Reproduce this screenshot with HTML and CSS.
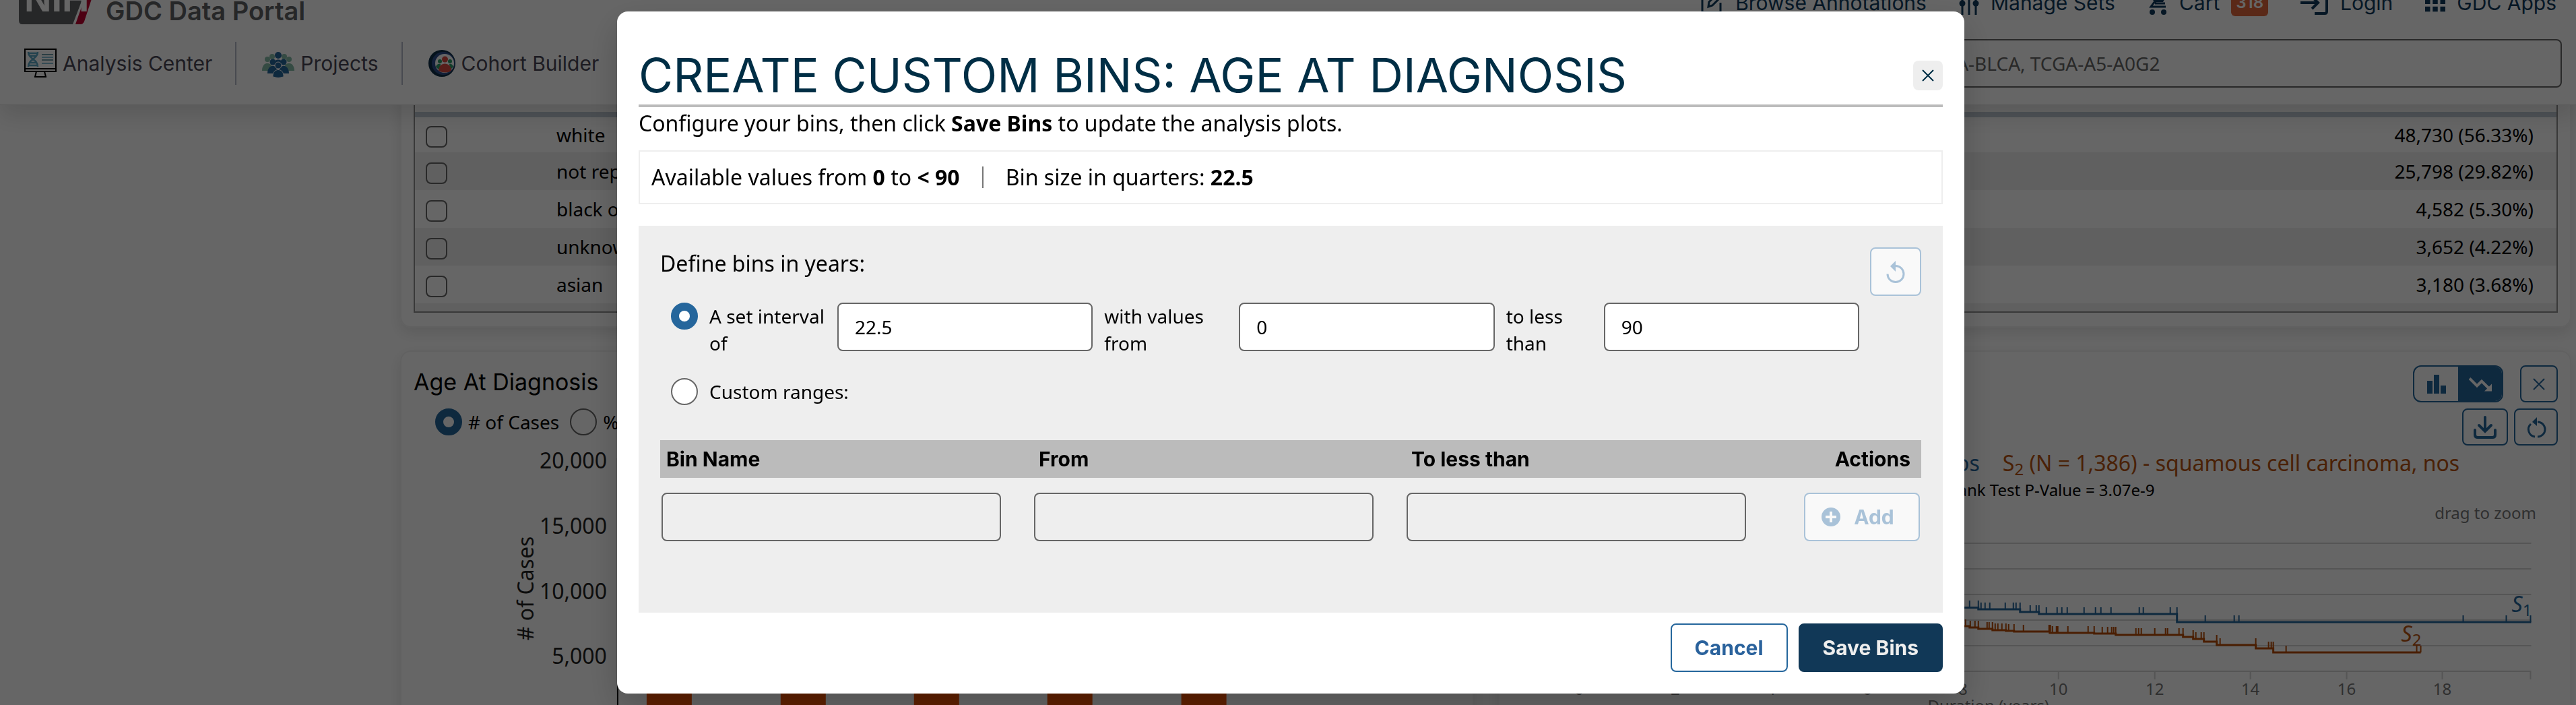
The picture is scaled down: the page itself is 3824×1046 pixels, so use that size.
FILE: index.html
```html
<!DOCTYPE html>
<html lang="en">
<head>
<meta charset="utf-8">
<title>GDC Data Portal</title>
<link rel="stylesheet" href="styles.css">
</head>
<body>
<header class="site-header">
  <div class="top-row">
    <a class="brand" href="#">
      <svg class="brand-logo" viewBox="0 0 114 68" aria-hidden="true">
        <path d="M0 0H106L80 68H5Q0 68 0 62Z" fill="#5f6165"/>
        <path d="M108 0H118L97 64Q95 68 92 68H84Z" fill="#c00030"/>
        <text x="8" y="49" class="nih">NIH</text>
      </svg>
      <span class="brand-name">GDC Data Portal</span>
    </a>
    <nav class="utility">
      <a href="#"><svg class="ico" viewBox="0 0 36 36"><path d="M20 5H4V32H31V18M13 24L14 17L28 3L33 8L19 22Z" fill="none" stroke="currentColor" stroke-width="3"/></svg>Browse Annotations</a>
      <a href="#"><svg class="ico slim" viewBox="0 0 30 36"><path d="M5 2V36M15 2V36M25 2V36" stroke="currentColor" stroke-width="3"/><circle cx="5" cy="19" r="4.500"/><circle cx="15" cy="8" r="4.500"/><circle cx="25" cy="19" r="4.500"/></svg>Manage Sets</a>
      <a href="#"><svg class="ico slim" viewBox="0 0 30 36"><path d="M0 3H5L12 19H26" fill="none" stroke="currentColor" stroke-width="3"/><path d="M7 5H29L23 17H12Z"/><path d="M10 17L5 24H27" fill="none" stroke="currentColor" stroke-width="3"/><circle cx="7" cy="32" r="4"/><circle cx="24" cy="32" r="4"/></svg>Cart<span class="badge">318</span></a>
      <a href="#"><svg class="ico wide" viewBox="0 0 42 36"><path d="M20 3H37Q39 3 39 6V31Q39 34 36 34H21M0 18H25M17 9L26 18L17 27" fill="none" stroke="currentColor" stroke-width="4"/></svg>Login</a>
      <a href="#"><svg class="ico slim" viewBox="0 0 32 36"><path d="M0 0h8v8h-8zM12 0h8v8h-8zM24 0h8v8h-8zM0 12h8v8h-8zM12 12h8v8h-8zM24 12h8v8h-8zM0 24h8v8h-8zM12 24h8v8h-8zM24 24h8v8h-8z"/></svg>GDC Apps</a>
    </nav>
  </div>
  <div class="nav-row">
    <nav class="tabs">
      <a href="#"><svg class="tab-ico" viewBox="0 0 48 44"><path d="M1 1H47V34H1ZM1 30H47M18 34L16 42M30 34L32 42M15 42H33" fill="none" stroke="#000" stroke-width="2"/><path d="M6 5C6 16 20 15 20 27M20 5C20 16 6 15 6 27M6 7H20M8 11H18M8 21H18M6 25H20" fill="none" stroke="#5aa5c4" stroke-width="2.500"/><path d="M26 9H43M26 17H43" stroke="#3f7f8f" stroke-width="1.500"/><path d="M26 13H43M26 22H43" stroke="#5aa5c4" stroke-width="1.500"/></svg>Analysis Center</a>
      <a href="#"><svg class="tab-ico" viewBox="0 0 48 44"><g fill="#85bba8"><circle cx="8" cy="16" r="4"/><circle cx="40" cy="16" r="4"/><circle cx="15" cy="12" r="4"/><circle cx="33" cy="12" r="4"/><path d="M0 33C0 18 16 18 16 33ZM32 33C32 18 48 18 48 33Z"/></g><g fill="#25669c"><circle cx="24" cy="10" r="5"/><path d="M17 24C17 14 31 14 31 24Z"/><circle cx="16" cy="20" r="4.500"/><circle cx="32" cy="20" r="4.500"/><path d="M8 37C8 22 24 22 24 37ZM24 37C24 22 40 22 40 37Z"/></g><g fill="#25669c" stroke="#fff"><circle cx="24" cy="25" r="5"/><path d="M16 42C15 28 33 28 32 42Q24 45 16 42Z"/></g></svg>Projects</a>
      <a href="#"><svg class="tab-ico round" viewBox="0 0 40 40"><circle cx="20" cy="20" r="20" fill="#0d2f47"/><circle cx="22" cy="20" r="17" fill="#2f4f8c"/><circle cx="24" cy="20" r="14" fill="#fff"/><circle cx="17" cy="17" r="3" fill="#2d9b69"/><circle cx="32" cy="17" r="3" fill="#2d9b69"/><path d="M11 25Q13 20 18 21L17 31ZM37 25Q35 20 31 21L32 30Z" fill="#2d9b69"/><circle cx="24.500" cy="14" r="4.500" fill="#d94c42"/><path d="M15 31C15 17 34 17 34 31Q25 36 15 31Z" fill="#d94c42"/></svg>Cohort Builder</a>
    </nav>
    <input class="site-search" type="search" aria-label="Search" placeholder="e.g. BRAF, Breast, TCGA-BLCA, TCGA-A5-A0G2">
  </div>
</header>

<main class="board">
  <section class="card first">
    <div class="table-scroll">
      <table class="counts">
        <thead><tr><th>Select</th><th>Race</th><th class="num"># Cases</th></tr></thead>
        <tbody>
          <tr><td><input type="checkbox" aria-label="white"></td><td>white</td><td class="num"></td></tr>
          <tr><td><input type="checkbox" aria-label="not reported"></td><td>not reported</td><td class="num"></td></tr>
          <tr><td><input type="checkbox" aria-label="black or african american"></td><td>black or african american</td><td class="num"></td></tr>
          <tr><td><input type="checkbox" aria-label="unknown"></td><td>unknown</td><td class="num"></td></tr>
          <tr><td><input type="checkbox" aria-label="asian"></td><td>asian</td><td class="num"></td></tr>
          <tr><td></td><td></td><td></td></tr>
        </tbody>
      </table>
    </div>
  </section>
  <section class="card first">
    <div class="table-scroll">
      <table class="counts">
        <thead><tr><th>Select</th><th>Gender</th><th class="num"># Cases</th></tr></thead>
        <tbody>
          <tr><td></td><td></td><td class="num">48,730 (56.33%)</td></tr>
          <tr><td></td><td></td><td class="num">25,798 (29.82%)</td></tr>
          <tr><td></td><td></td><td class="num">4,582 (5.30%)</td></tr>
          <tr><td></td><td></td><td class="num">3,652 (4.22%)</td></tr>
          <tr><td></td><td></td><td class="num">3,180 (3.68%)</td></tr>
          <tr><td></td><td></td><td></td></tr>
        </tbody>
      </table>
    </div>
  </section>

  <section class="card">
    <h2>Age At Diagnosis</h2>
    <div class="unit">
      <label><input type="radio" name="unit" checked># of Cases</label>
      <label><input type="radio" name="unit">% of Cases</label>
    </div>
    <svg class="plot" viewBox="0 0 1554 400" role="img" aria-label="Cases by age">
      <g class="axis-big" text-anchor="end">
        <text x="287" y="35">20,000</text><text x="287" y="132">15,000</text><text x="287" y="229">10,000</text><text x="287" y="325">5,000</text>
      </g>
      <text class="axis-big" text-anchor="middle" transform="translate(178 213) rotate(-90)"># of Cases</text>
      <path d="M303 20V400" stroke="#000" stroke-width="2"/>
      <path d="M346 300h67v100h-67zM545 300h67v100h-67zM743 300h67v100h-67zM941 300h67v100h-67zM1140 300h67v100h-67z" fill="#ee5000"/>
    </svg>
  </section>

  <section class="card">
    <div class="tools">
      <div class="toggle">
        <button type="button" aria-label="Histogram"><svg viewBox="0 0 28 28"><path d="M0 9h8v19h-8zM10 0h8v28h-8zM20 16h8v12h-8z"/></svg></button><button type="button" class="on" aria-label="Survival plot"><svg class="trend" viewBox="0 0 34 21"><path d="M1 2L12 13L19 6L30 17" fill="none" stroke="currentColor" stroke-width="4"/><path d="M34 10V21H23Z"/></svg></button>
      </div>
      <button type="button" class="tool close" aria-label="Remove"><svg class="cross" viewBox="0 0 18 18"><path d="M1 1L17 17M17 1L1 17" stroke="currentColor" stroke-width="2"/></svg></button>
    </div>
    <div class="tools second">
      <button type="button" class="tool save" aria-label="Download"><svg class="dl" viewBox="0 0 34 34"><path d="M17 2V22M8 14L17 23L26 14M2 21V28Q2 32 6 32H28Q32 32 32 28V21" fill="none" stroke="currentColor" stroke-width="4" stroke-linecap="round"/></svg></button>
      <button type="button" class="tool" aria-label="Reset zoom"><svg class="dl" viewBox="0 0 34 34"><path d="M19 9A11 11 0 0 1 19 31M15 31A11 11 0 0 1 9 12" fill="none" stroke="currentColor" stroke-width="3"/><path d="M18 2V15L11 9Z"/></svg></button>
    </div>
    <p class="legend"><span class="s1">S<sub>1</sub> (N = 5,173) - adenocarcinoma, nos</span><span class="s2">S<sub>2</sub> (N = 1,386) - squamous cell carcinoma, nos</span></p>
    <p class="pvalue">Log-Rank Test P-Value = 3.07e-9</p>
    <p class="hint">drag to zoom</p>
    <svg class="plot" viewBox="0 0 1554 300" role="img" aria-label="Survival curves">
      <path d="M100 26H1514M100 64H1514M100 102H1514M100 140H1514M100 178H1514M100 216H1514M812 216v12M955 216v12M1097 216v12M1240 216v12M1382 216v12M1513 216v12" stroke="#d4d4d4" stroke-width="2" fill="none"/>
      <g fill="none" stroke="#25669c">
        <path stroke-width="3" d="M600 121.500H693V124H755V128H783V131H988V143H1514"/>
        <path stroke-width="2" d="M680 121v-10M693 121v-10M697 124v-10M703 124v-10M710 124v-10M733 124v-10M745 124v-10M749 124v-10M755 124v-10M770 128v-10M779 128v-10M783 128v-10M794 131v-10M810 131v-10M817 131v-10M825 131v-10M850 131v-10M867 131v-10M875 131v-10M890 131v-10M932 131v-10M938 131v-10M978 131v-10M988 131v-10M1030 143v-10M1073 143v-10M1080 143v-10M1413 143v-10M1477 143v-10M1513 143v-10"/>
      </g>
      <g fill="none" stroke="#b84c05">
        <path stroke-width="3" d="M600 149H680V151H693V153H714V155H734V156H746V157H799V159H865V160H897V162H997V165H1012V168H1028V172H1047V177H1105V182H1131V188H1350"/>
        <path stroke-width="2" d="M674 149v-10M681 151v-10M688 151v-10M693 151v-10M706 153v-10M709 153v-10M714 153v-10M718 155v-10M722 155v-10M728 155v-10M734 155v-10M738 156v-10M746 156v-10M760 157v-10M798 157v-10M800 157v-10M803 159v-10M809 159v-10M811 159v-10M826 159v-10M856 159v-10M865 159v-10M877 160v-10M885 160v-10M891 160v-10M894 160v-10M897 160v-10M927 162v-10M931 162v-10M935 162v-10M955 162v-10M971 162v-10M974 162v-10M991 162v-10M997 162v-10M1012 165v-10M1016 168v-10M1024 168v-10M1028 168v-10M1047 172v-10M1052 177v-10M1105 177v-10M1124 182v-10M1128 182v-10M1131 182v-10M1150 188v-10M1344 188v-10M1350 188v-10"/>
      </g>
      <text class="curve s1" x="1485" y="128">S<tspan class="sub" dy="6">1</tspan></text>
      <text class="curve s2" x="1321" y="172">S<tspan class="sub" dy="6">2</tspan></text>
      <g class="ticks" text-anchor="middle">
        <text x="100" y="251">0</text><text x="243" y="251">2</text><text x="385" y="251">4</text><text x="528" y="251">6</text><text x="670" y="251">8</text><text x="812" y="251">10</text><text x="955" y="251">12</text><text x="1097" y="251">14</text><text x="1240" y="251">16</text><text x="1382" y="251">18</text>
        <text x="708" y="276">Duration (years)</text>
      </g>
    </svg>
  </section>
</main>

<div class="overlay">
  <form class="modal" role="dialog" aria-labelledby="modal-title">
    <header class="modal-head">
      <h1 id="modal-title">CREATE CUSTOM BINS: AGE AT DIAGNOSIS</h1>
      <button type="button" class="modal-close" aria-label="Close"><svg class="cross" viewBox="0 0 18 18"><path d="M1 1L17 17M17 1L1 17" stroke="currentColor" stroke-width="2"/></svg></button>
    </header>
    <p class="intro">Configure your bins, then click <b>Save Bins</b> to update the analysis plots.</p>
    <div class="facts"><span>Available values from <b>0</b> to <b>&lt; 90</b></span><span class="rule"></span><span>Bin size in quarters: <b>22.5</b></span></div>
    <div class="panel">
      <div class="panel-head">
        <span>Define bins in years:</span>
        <button type="button" class="reset" disabled aria-label="Reset"><svg viewBox="0 0 28 34"><path d="M14 8.500A12 12 0 1 1 2 20.500" fill="none" stroke="currentColor" stroke-width="3"/><path d="M14 1V17L6 9Z"/></svg></button>
      </div>
      <div class="interval">
        <input type="radio" name="mode" id="mode-set" checked>
        <label for="mode-set">A set interval of</label>
        <input type="text" value="22.5" aria-label="Interval">
        <label for="from">with values from</label>
        <input type="text" id="from" value="0">
        <label for="to">to less than</label>
        <input type="text" id="to" value="90">
      </div>
      <div class="custom">
        <input type="radio" name="mode" id="mode-custom">
        <label for="mode-custom">Custom ranges:</label>
      </div>
      <table class="bins">
        <thead><tr><th>Bin Name</th><th>From</th><th>To less than</th><th class="actions">Actions</th></tr></thead>
        <tbody><tr>
          <td><input type="text" disabled aria-label="Bin name"></td>
          <td><input type="text" disabled aria-label="Bin from"></td>
          <td><input type="text" disabled aria-label="Bin to less than"></td>
          <td class="actions"><button type="button" class="add" disabled><svg viewBox="0 0 28 28"><path fill-rule="evenodd" d="M14 0A14 14 0 1 1 14 28A14 14 0 1 1 14 0ZM12 6V12H6V16H12V22H16V16H22V12H16V6Z"/></svg>Add</button></td>
        </tr></tbody>
      </table>
    </div>
    <footer class="modal-foot">
      <button type="button" class="btn">Cancel</button>
      <button type="submit" class="btn primary">Save Bins</button>
    </footer>
  </form>
</div>
</body>
</html>
```
FILE: styles.css
```css
* { box-sizing: border-box; }

body {
  margin: 0;
  height: 100vh;
  overflow: hidden;
  background: #fff;
  color: #000;
  font: 28px/40px "Noto Sans", sans-serif;
}

h1, h2, p { margin: 0; font-weight: 400; }
a { color: inherit; text-decoration: none; }
button, input { font: inherit; color: inherit; margin: 0; }
svg { display: block; fill: currentColor; }

/* Header, scrolled partly out of view */
.site-header {
  position: relative;
  z-index: 1;
  margin-top: -32px;
  background: #fff;
  border-bottom: 2px solid #eee;
  box-shadow: 0 16px 32px rgba(0, 0, 0, .12);
  font-family: Inter, sans-serif;
  font-size: 30px;
}

.top-row {
  display: flex;
  justify-content: space-between;
  align-items: center;
  height: 72px;
  padding: 0 29px 0 28px;
}

.brand { display: flex; gap: 15px; align-items: flex-end; height: 100%; padding-bottom: 4px; color: #5f6165; }
.brand-logo { width: 114px; height: 68px; overflow: visible; }
.nih { font: bold 56px "Liberation Sans", sans-serif; fill: #fff; }
.brand-name { font-size: 38px; font-weight: 600; line-height: 40px; }

.utility { display: flex; gap: 48px; color: #0f3b5e; }
.utility a { display: flex; align-items: center; gap: 17px; }
.ico { width: 36px; height: 36px; }
.ico.slim { width: 30px; }
.ico.wide { width: 42px; }

.badge {
  padding: 0 7px;
  border-radius: 6px;
  background: #e0663c;
  color: #fff;
  font-size: 24px;
  font-weight: 600;
}

.nav-row {
  display: flex;
  justify-content: space-between;
  align-items: center;
  padding: 18px 21px 24px 36px;
}

.tabs { display: flex; color: #4a4656; }
.tabs a { display: flex; align-items: center; gap: 9px; height: 64px; padding-right: 34px; }
.tabs a + a { border-left: 2px solid #b5b8c8; padding-left: 38px; }
.tab-ico { width: 48px; height: 44px; }
.tab-ico.round { width: 40px; }

.site-search {
  width: 34%;
  height: 72px;
  padding: 0 92px;
  border: 2px solid #666;
  border-radius: 8px;
  background: #fff;
  font-family: "Noto Sans", sans-serif;
  font-size: 28px;
}
.site-search::placeholder { color: #666; opacity: 1; }

/* Cards */
.board {
  display: grid;
  grid-template-columns: 1fr 1fr;
  gap: 34px 36px;
  margin-top: -80px;
  padding: 0 7px 0 594px;
}

.card {
  padding: 20px 18px;
  border: 2px solid #f3f3f3;
  border-radius: 16px;
  box-shadow: 0 8px 20px rgba(0, 0, 0, .1);
}

.card h2 { font: 34px/48px Inter, sans-serif; padding-top: 1px; }

.table-scroll { max-height: 366px; overflow: hidden; border: 2px solid #8f8f8f; }
.counts { width: 100%; border-collapse: collapse; }
.counts th { height: 70px; padding: 0 16px; border-bottom: 8px solid #c3cdd7; text-align: left; vertical-align: top; }
.counts td { height: 56px; padding: 0 16px; }
.counts th:first-child { width: 194px; }
.counts .num { text-align: right; padding-right: 34px; }
.counts tbody tr:nth-child(even) { background: #f0f0f0; }

input[type="checkbox"] {
  appearance: none;
  display: block;
  width: 32px;
  height: 32px;
  margin-top: 6px;
  border: 2px solid #666;
  border-radius: 8px;
}

input[type="radio"] {
  appearance: none;
  flex: none;
  width: 40px;
  height: 40px;
  border: 2px solid #666;
  border-radius: 50%;
  background: #fff;
}
input[type="radio"]:checked { border: 12px solid #25669c; }

.unit { display: flex; gap: 16px; padding: 15px 0 14px 32px; }
.unit label { display: flex; gap: 9px; }

.plot { width: 100%; height: auto; }
.axis-big { font-size: 32px; fill: #222; }
.ticks { font-size: 24px; fill: #777; }
.curve { font-size: 32px; font-style: italic; }
.curve .sub { font-size: 24px; font-style: normal; }
.s1 { color: #25669c; fill: #25669c; }
.s2 { color: #b85410; fill: #b85410; }

.tools { display: flex; justify-content: flex-end; gap: 25px; color: #25669c; }
.tools.second { gap: 9px; padding-top: 9px; }
.tools button { display: flex; align-items: center; justify-content: center; height: 55px; padding: 0; background: none; }
.toggle { display: flex; overflow: hidden; border: 2px solid #25669c; border-radius: 12px; }
.tools .toggle button { width: 65px; height: 51px; border: 0; }
.tools .toggle .on { background: #25669c; color: #fff; }
.toggle svg { width: 28px; height: 28px; }
.toggle .trend { width: 34px; }
.tool { width: 65px; border: 2px solid #25669c; border-radius: 8px; }
.tool.close { width: 56px; }
.tool.save { width: 68px; }
.cross { width: 18px; height: 18px; }
.dl { width: 34px; height: 34px; }

.legend { display: flex; justify-content: center; gap: 34px; padding-top: 4px; font-size: 32px; line-height: 44px; white-space: nowrap; }
.legend sub { font-size: 24px; line-height: 0; vertical-align: -6px; }
.pvalue { font-size: 24px; line-height: 36px; text-align: center; }
.hint { padding: 0 32px 3px 0; font-size: 24px; line-height: 32px; text-align: right; color: #777; }

.overlay {
  position: fixed;
  inset: 0;
  z-index: 2;
  display: flex;
  align-items: center;
  justify-content: center;
  padding-left: 8px;
  background: rgba(0, 0, 0, .6);
}

.modal {
  width: 92%;
  max-width: 2000px;
  padding: 32px;
  border-radius: 16px;
  background: #fff;
  box-shadow: 0 20px 50px rgba(0, 0, 0, .2);
}

.modal-head {
  display: flex;
  align-items: center;
  justify-content: space-between;
  padding: 32px 0 12px;
  border-bottom: 4px solid #bbb;
  color: #002e45;
}
.modal-head h1 { font: 70px/62px Inter, sans-serif; }
.modal-close {
  display: grid;
  place-items: center;
  width: 44px;
  height: 44px;
  padding: 0;
  border: 0;
  border-radius: 8px;
  background: #eee;
}

.intro { margin-bottom: 16px; font-size: 32px; line-height: 48px; }

.facts {
  display: flex;
  align-items: center;
  gap: 33px;
  height: 80px;
  padding: 0 17px;
  border: 2px solid #eee;
  font-size: 32px;
}
.rule { width: 2px; height: 32px; background: #777; }

.panel { margin: 32px 0 16px; padding: 32px 32px 106px; background: #eee; }
.panel-head { display: flex; justify-content: space-between; font-size: 32px; line-height: 48px; }

.reset, .add {
  display: flex;
  align-items: center;
  justify-content: center;
  height: 72px;
  padding: 0;
  border: 2px solid #a9c2d8;
  border-radius: 8px;
  background: #f9f9f9;
  color: #a9c2d8;
}
.reset { width: 76px; }
.reset svg { width: 28px; height: 34px; }

.interval {
  display: grid;
  grid-template-columns: 40px 173px 379fr 183px 379fr 128px 379fr;
  gap: 17px;
  align-items: start;
  padding: 10px 92px 32px 16px;
}
.custom { display: flex; gap: 17px; padding: 0 16px 52px; }

.panel input[type="text"] {
  width: 100%;
  height: 72px;
  padding: 0 24px;
  border: 2px solid #666;
  border-radius: 8px;
  background: #fff;
}
.panel input[type="text"]:disabled { background: none; }

.bins { width: 100%; table-layout: fixed; border-collapse: collapse; }
.bins th { height: 56px; padding: 0 9px; background: #bbb; font: bold 30px/40px Inter, sans-serif; text-align: left; }
.bins th:not(.actions) { width: 553px; }
.bins td { padding: 22px 47px 0 2px; }
.bins th.actions { padding-right: 16px; text-align: right; }
.bins td.actions { padding-right: 2px; }
.add { gap: 20px; width: 172px; margin-left: auto; padding-right: 12px; font-family: Inter, sans-serif; font-size: 30px; font-weight: 700; }
.add svg { width: 28px; height: 28px; }

.modal-foot { display: flex; justify-content: flex-end; gap: 16px; }
.btn {
  height: 72px;
  padding: 0 34px;
  border: 2px solid #25669c;
  border-radius: 8px;
  background: #fff;
  color: #2a629c;
  font-family: Inter, sans-serif;
  font-size: 30px;
  font-weight: 700;
}
.btn.primary { border-color: #113857; background: #113857; color: #eee; }
```
